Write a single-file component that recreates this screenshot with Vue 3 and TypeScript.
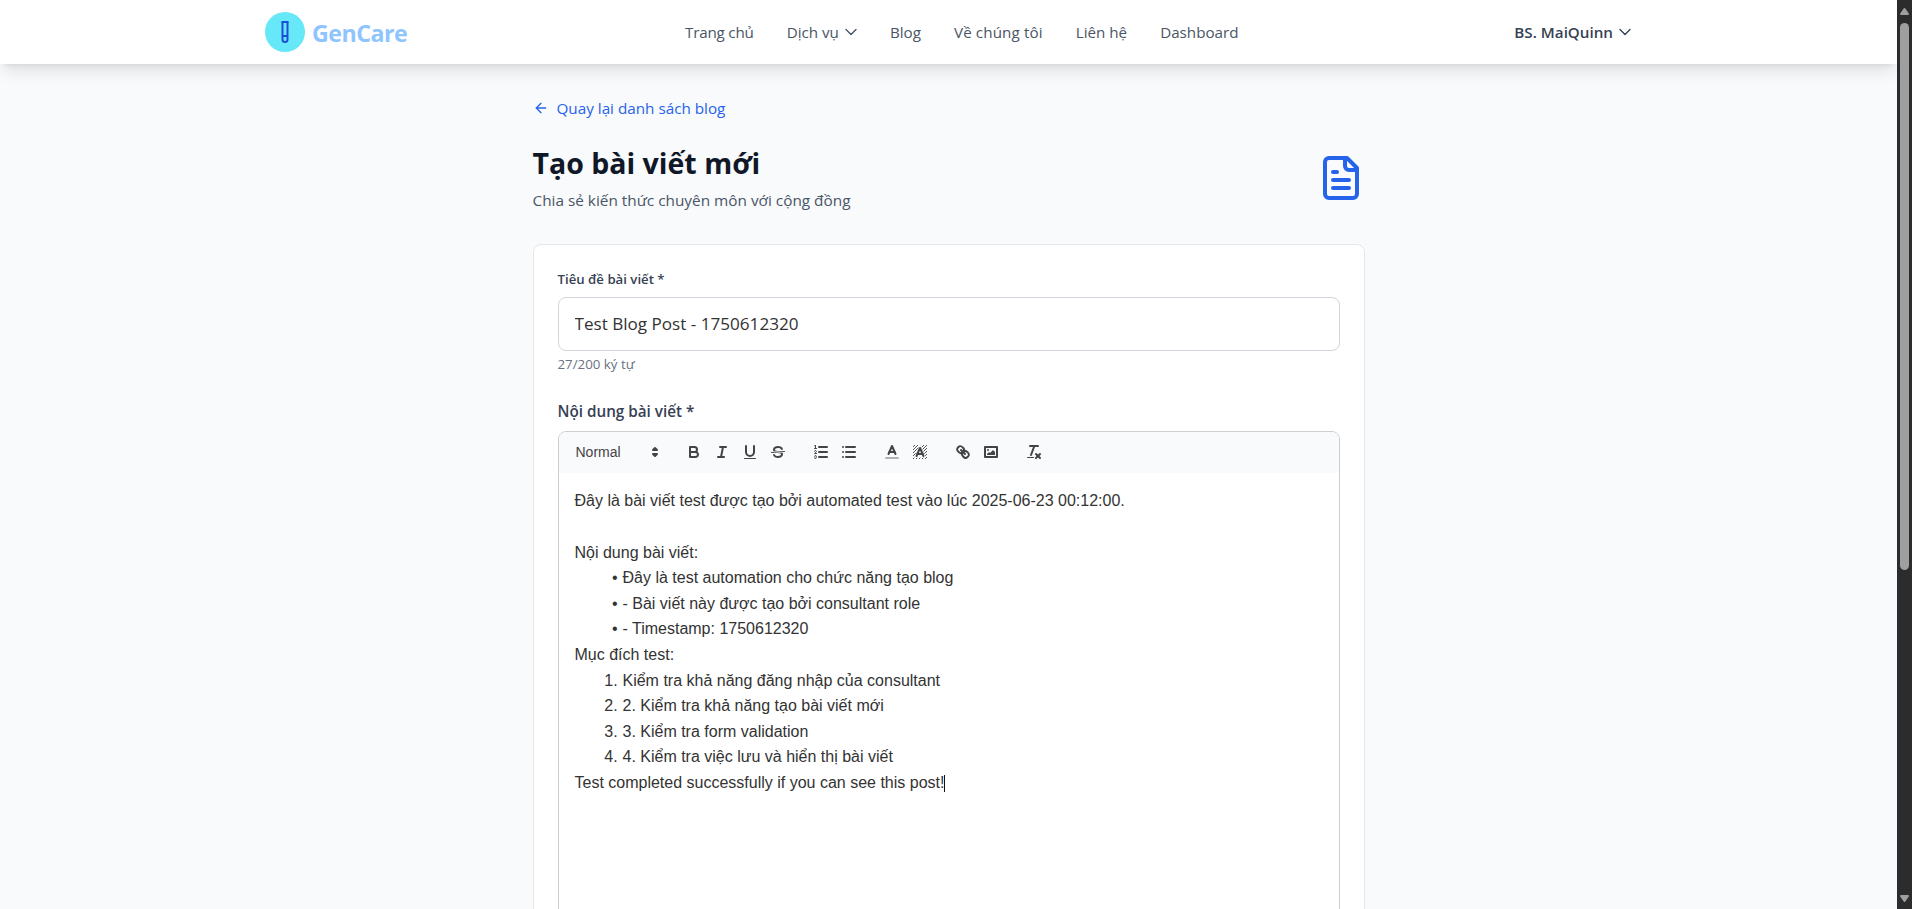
<script setup lang="ts">
import { ref, computed } from 'vue'

interface NavItem {
  label: string
  cls: string
  menu?: boolean
}

const navItems: NavItem[] = [
  { label: 'Trang chủ', cls: 'home' },
  { label: 'Dịch vụ', cls: 'services', menu: true },
  { label: 'Blog', cls: 'blog' },
  { label: 'Về chúng tôi', cls: 'about' },
  { label: 'Liên hệ', cls: 'contact' },
  { label: 'Dashboard', cls: 'dashboard' },
]

const title = ref('Test Blog Post - 1750612320')
const counter = computed(() => `${title.value.length}/200 ký tự`)

const bullets: string[] = [
  'Đây là test automation cho chức năng tạo blog',
  '- Bài viết này được tạo bởi consultant role',
  '- Timestamp: 1750612320',
]
const steps: string[] = [
  'Kiểm tra khả năng đăng nhập của consultant',
  '2. Kiểm tra khả năng tạo bài viết mới',
  '3. Kiểm tra form validation',
  '4. Kiểm tra việc lưu và hiển thị bài viết',
]
</script>

<template>
  <div class="window">
    <div class="page">
      <header class="header">
        <a class="brand">
          <span class="brand-mark">
            <svg width="24" height="24" viewBox="0 0 24 24" class="tube">
              <path d="M14.5 2v17.5c0 1.4-1.1 2.5-2.5 2.5s-2.5-1.1-2.5-2.5V2" />
              <path d="M8.5 2h7" />
              <path d="M14.5 16h-5" />
            </svg>
          </span>
          <span class="brand-name">GenCare</span>
        </a>
        <nav class="nav">
          <a v-for="item in navItems" :key="item.cls" class="nav-item" :class="item.cls">
            <span>{{ item.label }}</span>
            <svg v-if="item.menu" class="chevron" width="12" height="12" viewBox="0 0 12 12">
              <path d="M1 3.5l5 5 5-5" />
            </svg>
          </a>
        </nav>
        <div class="user">
          <span>BS. MaiQuinn</span>
          <svg class="chevron" width="12" height="12" viewBox="0 0 12 12">
            <path d="M1 3.5l5 5 5-5" />
          </svg>
        </div>
      </header>

      <main class="main">
        <a class="back">
          <svg width="16" height="16" viewBox="0 0 24 24" class="line-icon">
            <path d="m12 19-7-7 7-7" />
            <path d="M19 12H5" />
          </svg>
          <span>Quay lại danh sách blog</span>
        </a>
        <div class="heading">
          <div>
            <h1>Tạo bài viết mới</h1>
            <p class="subtitle">Chia sẻ kiến thức chuyên môn với cộng đồng</p>
          </div>
          <svg width="48" height="48" viewBox="0 0 24 24" class="line-icon">
            <path d="M15 2H6a2 2 0 0 0-2 2v16a2 2 0 0 0 2 2h12a2 2 0 0 0 2-2V7Z" />
            <path d="M14 2v4a2 2 0 0 0 2 2h4" />
            <path d="M10 9H8" />
            <path d="M16 13H8" />
            <path d="M16 17H8" />
          </svg>
        </div>

        <section class="card">
          <label class="label small" for="title">Tiêu đề bài viết *</label>
          <input id="title" v-model="title" class="input" type="text" />
          <p class="counter">{{ counter }}</p>
          <div class="label large">Nội dung bài viết *</div>

          <div class="editor">
            <div class="toolbar">
              <div class="group">
                <div class="picker">
                  <span>Normal</span>
                  <svg viewBox="0 0 18 18">
                    <polygon class="s" points="7 11 9 13 11 11 7 11" />
                    <polygon class="s" points="7 7 9 5 11 7 7 7" />
                  </svg>
                </div>
              </div>
              <div class="group">
                <button type="button">
                  <svg viewBox="0 0 18 18">
                    <path class="s" d="M5,4H9.5A2.5,2.5,0,0,1,12,6.5v0A2.5,2.5,0,0,1,9.5,9H5A0,0,0,0,1,5,9V4A0,0,0,0,1,5,4Z" />
                    <path class="s" d="M5,9h5.5A2.5,2.5,0,0,1,13,11.5v0A2.5,2.5,0,0,1,10.5,14H5a0,0,0,0,1,0,0V9A0,0,0,0,1,5,9Z" />
                  </svg>
                </button>
                <button type="button">
                  <svg viewBox="0 0 18 18">
                    <line class="s" x1="7" x2="13" y1="4" y2="4" />
                    <line class="s" x1="5" x2="11" y1="14" y2="14" />
                    <line class="s" x1="8" x2="10" y1="14" y2="4" />
                  </svg>
                </button>
                <button type="button">
                  <svg viewBox="0 0 18 18">
                    <path class="s" d="M5,3V9a4.012,4.012,0,0,0,4,4H9a4.012,4.012,0,0,0,4-4V3" />
                    <rect class="f" height="1" rx="0.5" ry="0.5" width="12" x="3" y="15" />
                  </svg>
                </button>
                <button type="button">
                  <svg viewBox="0 0 18 18">
                    <line class="s thin" x1="15.5" x2="2.5" y1="8.5" y2="9.5" />
                    <path class="f" d="M9.007,8C6.542,7.791,6,7.519,6,6.5,6,5.792,7.283,5,9,5c1.571,0,2.765.679,2.969,1.309a1,1,0,0,0,1.9-.617C13.356,4.106,11.354,3,9,3,6.2,3,4,4.538,4,6.5a3.2,3.2,0,0,0,.5,1.843Z" />
                    <path class="f" d="M8.984,10C11.457,10.208,12,10.479,12,11.5c0,.708-1.283,1.5-3,1.5-1.571,0-2.765-.679-2.969-1.309a1,1,0,1,0-1.9.617C4.644,13.894,6.646,15,9,15c2.8,0,5-1.538,5-3.5a3.2,3.2,0,0,0-.5-1.843Z" />
                  </svg>
                </button>
              </div>
              <div class="group">
                <button type="button">
                  <svg viewBox="0 0 18 18">
                    <line class="s" x1="7" x2="15" y1="4" y2="4" />
                    <line class="s" x1="7" x2="15" y1="9" y2="9" />
                    <line class="s" x1="7" x2="15" y1="14" y2="14" />
                    <line class="s thin" x1="2.5" x2="4.5" y1="5.5" y2="5.5" />
                    <path class="f" d="M3.5,6A0.5,0.5,0,0,1,3,5.5V3.085l-0.276.138A0.5,0.5,0,0,1,2.053,3c-0.124-.247-0.023-0.324.224-0.447l1-.5A0.5,0.5,0,0,1,4,2.5v3A0.5,0.5,0,0,1,3.5,6Z" />
                    <path class="s thin" d="M4.5,10.5h-2c0-.234,1.85-1.076,1.85-2.234A0.959,0.959,0,0,0,2.5,8.156" />
                    <path class="s thin" d="M2.5,14.846a0.959,0.959,0,0,0,1.85-.109A0.7,0.7,0,0,0,3.75,14a0.688,0.688,0,0,0,.6-0.736,0.959,0.959,0,0,0-1.85-.109" />
                  </svg>
                </button>
                <button type="button">
                  <svg viewBox="0 0 18 18">
                    <line class="s" x1="6" x2="15" y1="4" y2="4" />
                    <line class="s" x1="6" x2="15" y1="9" y2="9" />
                    <line class="s" x1="6" x2="15" y1="14" y2="14" />
                    <line class="s" x1="3" x2="3" y1="4" y2="4" />
                    <line class="s" x1="3" x2="3" y1="9" y2="9" />
                    <line class="s" x1="3" x2="3" y1="14" y2="14" />
                  </svg>
                </button>
              </div>
              <div class="group">
                <button type="button">
                  <svg viewBox="0 0 18 18">
                    <line class="s faint" x1="3" x2="15" y1="15" y2="15" />
                    <polyline class="s" points="5.5 11 9 3 12.5 11" />
                    <line class="s" x1="11.63" x2="6.38" y1="9" y2="9" />
                  </svg>
                </button>
                <button type="button">
                  <svg viewBox="0 0 18 18">
                    <defs>
                      <pattern id="hatch" width="3" height="3" patternUnits="userSpaceOnUse">
                        <path d="M-1 1L1 -1M0 3L3 0M2 4L4 2" stroke="#444" stroke-width="0.9" />
                      </pattern>
                    </defs>
                    <rect x="2" y="2" width="14" height="14" fill="url(#hatch)" />
                    <path class="halo" d="M5.5 13L9 5l3.500 8z" />
                    <polyline class="s" points="5.5 13 9 5 12.5 13" />
                    <line class="s" x1="11.63" x2="6.38" y1="11" y2="11" />
                  </svg>
                </button>
              </div>
              <div class="group">
                <button type="button">
                  <svg viewBox="0 0 18 18">
                    <line class="s" x1="7" x2="11" y1="7" y2="11" />
                    <path class="s" d="M8.9,4.577a3.476,3.476,0,0,1,.36,4.679A3.476,3.476,0,0,1,4.577,8.9C3.185,7.5,2.035,6.4,4.217,4.217S7.5,3.185,8.9,4.577Z" />
                    <path class="s" d="M13.423,9.1a3.476,3.476,0,0,0-4.679-.36,3.476,3.476,0,0,0,.36,4.679c1.392,1.392,2.5,2.542,4.679.36S14.815,10.5,13.423,9.1Z" />
                  </svg>
                </button>
                <button type="button">
                  <svg viewBox="0 0 18 18">
                    <rect class="s" height="10" width="12" x="3" y="4" />
                    <circle class="f" cx="6" cy="7" r="1" />
                    <polyline class="f" points="5 12 5 11 7 9 8 10 11 7 13 9 13 12 5 12" />
                  </svg>
                </button>
              </div>
              <div class="group">
                <button type="button">
                  <svg viewBox="0 0 18 18">
                    <line class="s" x1="5" x2="13" y1="3" y2="3" />
                    <line class="s" x1="6" x2="9.35" y1="12" y2="3" />
                    <line class="s" x1="11" x2="15" y1="11" y2="15" />
                    <line class="s" x1="15" x2="11" y1="11" y2="15" />
                    <rect class="f" height="1" rx="0.5" ry="0.5" width="7" x="2" y="14" />
                  </svg>
                </button>
              </div>
            </div>
            <div class="content">
              <p>Đây là bài viết test được tạo bởi automated test vào lúc 2025-06-23 00:12:00.</p>
              <p><br /></p>
              <p>Nội dung bài viết:</p>
              <ul>
                <li v-for="text in bullets" :key="text"><span class="marker">•</span>{{ text }}</li>
              </ul>
              <p>Mục đích test:</p>
              <ul>
                <li v-for="(text, i) in steps" :key="text"><span class="marker">{{ i + 1 }}.</span>{{ text }}</li>
              </ul>
              <p>Test completed successfully if you can see this post!<span class="caret"></span></p>
            </div>
          </div>
        </section>
      </main>
    </div>

    <div class="scrollbar">
      <svg width="9" height="7" viewBox="0 0 9 7"><path d="M3.700 .6Q4.500-.4 5.300.6L8.800 5.600Q9.200 7 8 7H1Q-.2 7 .2 5.600Z" /></svg>
      <div class="thumb"></div>
      <svg class="down" width="9" height="7" viewBox="0 0 9 7"><path d="M3.700 6.400Q4.500 7.400 5.300 6.400L8.800 1.400Q9.200 0 8 0H1Q-.2 0 .2 1.400Z" /></svg>
    </div>
  </div>
</template>

<style>
body {
  margin: 0;
  overflow: hidden;
}
</style>

<style scoped>
.window {
  display: flex;
  width: 1912px;
  height: 909px;
  overflow: hidden;
  font-family: 'Open Sans', 'Noto Sans', sans-serif;
}
.window * {
  box-sizing: border-box;
}
.page {
  flex: 1;
  min-width: 0;
  height: 909px;
  overflow: hidden;
  background: #f9fafc;
}
.header {
  display: grid;
  grid-template-columns: 420px 1fr auto;
  height: 64px;
  padding: 0 266px 0 265px;
  align-items: center;
  background: #fff;
  box-shadow: 0 10px 15px -3px rgba(0, 0, 0, 0.1), 0 4px 6px -4px rgba(0, 0, 0, 0.1);
}
.brand {
  display: flex;
  align-items: center;
  gap: 7px;
}
.brand-mark {
  display: flex;
  align-items: center;
  justify-content: center;
  width: 40px;
  height: 40px;
  border-radius: 50%;
  background: #67e8f9;
}
.tube {
  fill: none;
  stroke: #1d4ed8;
  stroke-width: 2;
}
.brand-name {
  padding-top: 2px;
  font-size: 23.200px;
  line-height: 32px;
  font-weight: 700;
  letter-spacing: -0.5px;
  color: #8ec5ff;
}
.nav {
  display: flex;
  gap: 33px;
  font-size: 15.200px;
  line-height: 24px;
  color: #4a5565;
}
.nav-item,
.user {
  display: flex;
  align-items: center;
  white-space: nowrap;
}
.home {
  letter-spacing: -0.2px;
}
.about {
  letter-spacing: 0.12px;
}
.chevron {
  fill: none;
  stroke: currentColor;
  stroke-width: 1.400;
  stroke-linecap: round;
  stroke-linejoin: round;
}
.nav .chevron {
  margin-left: 6px;
}
.user {
  gap: 6px;
  font-size: 15.200px;
  font-weight: 600;
  color: #364153;
}
.main {
  width: 832px;
  margin: 32px auto 0;
}
.back {
  display: flex;
  align-items: center;
  gap: 8px;
  height: 24px;
  font-size: 15.250px;
  color: #2563eb;
}
.line-icon {
  fill: none;
  stroke: #2563eb;
  stroke-width: 2;
  stroke-linecap: round;
  stroke-linejoin: round;
}
.heading {
  display: flex;
  align-items: center;
  justify-content: space-between;
  margin-top: 24px;
}
h1 {
  margin: 0;
  padding-top: 1px;
  font-size: 28.500px;
  line-height: 36px;
  font-weight: 700;
  color: #101828;
}
.subtitle {
  margin: 7px 0 0;
  font-size: 15.350px;
  line-height: 24px;
  color: #4a5565;
}
.card {
  margin-top: 32px;
  height: 1000px;
  padding: 24px;
  border: 1px solid #e5e7eb;
  border-radius: 8px;
  background: #fff;
}
.label {
  display: block;
  font-weight: 600;
  color: #364153;
}
.small {
  margin-bottom: 8px;
  font-size: 13.200px;
  line-height: 20px;
}
.large {
  margin: 24px 0 8px;
  font-size: 15.250px;
  line-height: 24px;
}
.input {
  display: block;
  width: 100%;
  height: 54px;
  padding: 0 16px 1px;
  border: 1px solid #d1d5dc;
  border-radius: 8px;
  outline: none;
  background: #fff;
  font-family: inherit;
  font-size: 17.100px;
  color: #333;
}
.counter {
  margin: 3px 0 0;
  padding-bottom: 1px;
  font-size: 13.300px;
  line-height: 20px;
  color: #6a7282;
}
.editor {
  height: 700px;
  border: 1px solid #ccced3;
  border-radius: 8px;
  overflow: hidden;
  font-family: 'Liberation Sans', Arial, sans-serif;
}
.toolbar {
  display: flex;
  gap: 15px;
  height: 41px;
  padding: 8px;
  background: #f9fafc;
}
.group {
  display: flex;
  height: 24px;
}
.picker {
  display: flex;
  align-items: center;
  justify-content: space-between;
  width: 98px;
  padding: 0 1px 0 9px;
  font-size: 14px;
  font-weight: 500;
  color: #444;
}
.toolbar svg {
  display: block;
  width: 18px;
  height: 18px;
}
button {
  width: 28px;
  height: 24px;
  padding: 3px 5px;
  border: 0;
  background: none;
}
.s {
  fill: none;
  stroke: #444;
  stroke-width: 2;
  stroke-linecap: round;
  stroke-linejoin: round;
}
.thin {
  stroke-width: 1;
}
.faint {
  opacity: 0.4;
}
.f {
  fill: #444;
}
.halo {
  fill: #f9fafc;
  stroke: #f9fafc;
  stroke-width: 3.500;
}
.content {
  padding: 15.400px 16px;
  font-size: 16px;
  line-height: 25.600px;
  color: #333;
}
.content p,
.content ul {
  margin: 0;
  padding: 0;
}
.content li {
  display: flex;
}
.marker {
  width: 43.200px;
  margin-right: 4.800px;
  text-align: right;
}
.caret {
  display: inline-block;
  width: 1px;
  height: 17px;
  vertical-align: -4px;
  background: #111;
}
.scrollbar {
  display: flex;
  flex-direction: column;
  align-items: center;
  width: 15px;
  height: 909px;
  padding: 8px 0 7px;
  background: #2c2c2c;
}
.scrollbar svg {
  fill: #9f9f9f;
}
.thumb {
  width: 9px;
  height: 547px;
  margin-top: 8px;
  border-radius: 5px;
  background: #9f9f9f;
}
.down {
  margin-top: auto;
}
</style>
